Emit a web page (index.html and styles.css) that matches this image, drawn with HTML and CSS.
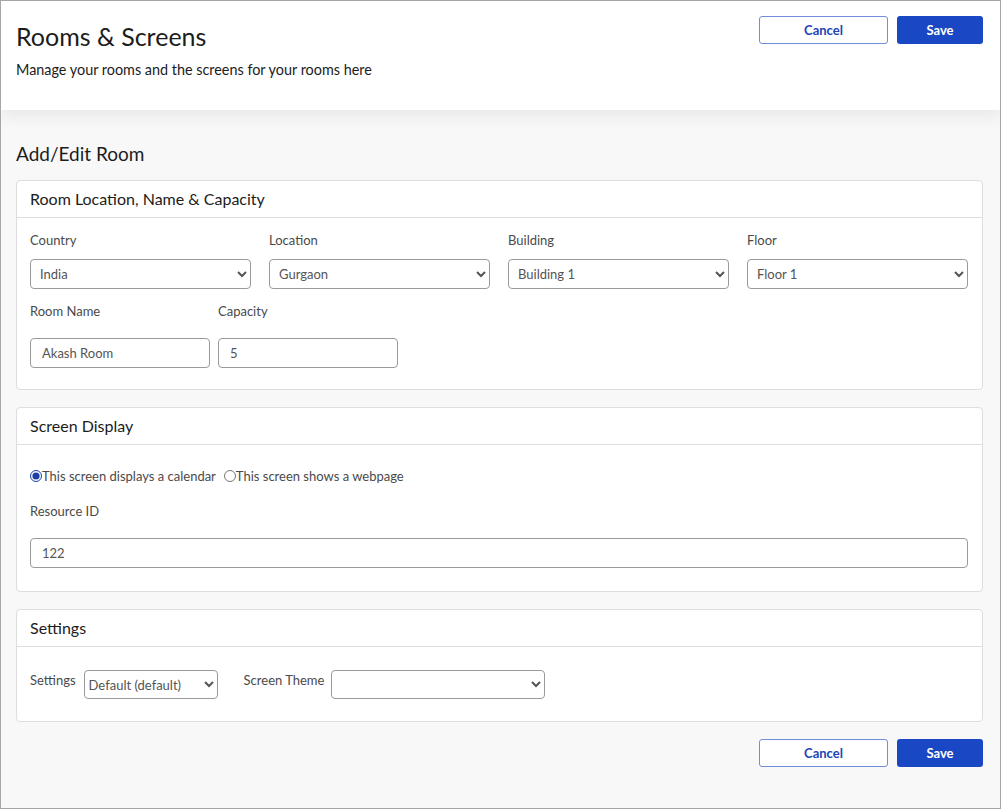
FILE: index.html
```html
<!DOCTYPE html>
<html lang="en">
<head>
    <meta charset="UTF-8">
    <meta name="viewport" content="width=device-width, initial-scale=1.0">
    <title>Rooms &amp; Screens</title>
    <link rel="stylesheet" href="styles.css">
</head>
<body>
    <div class="frame">
        <div class="page-header">
            <div class="header-text">
                <h1>Rooms &amp; Screens</h1>
                <p>Manage your rooms and the screens for your rooms here</p>
            </div>
            <div class="actions">
                <button class="btn btn-outline">Cancel</button>
                <button class="btn btn-primary">Save</button>
            </div>
        </div>

        <div class="content">
            <h2>Add/Edit Room</h2>

            <div class="card">
                <div class="card-title">Room Location, Name &amp; Capacity</div>
                <div class="card-body">
                    <div class="grid-4">
                        <div class="field">
                            <label>Country</label>
                            <select><option>India</option></select>
                        </div>
                        <div class="field">
                            <label>Location</label>
                            <select><option>Gurgaon</option></select>
                        </div>
                        <div class="field">
                            <label>Building</label>
                            <select><option>Building 1</option></select>
                        </div>
                        <div class="field">
                            <label>Floor</label>
                            <select><option>Floor 1</option></select>
                        </div>
                    </div>
                    <div class="row-2">
                        <div class="field field-small">
                            <label>Room Name</label>
                            <input type="text" value="Akash Room">
                        </div>
                        <div class="field field-small">
                            <label>Capacity</label>
                            <input type="text" value="5">
                        </div>
                    </div>
                </div>
            </div>

            <div class="card">
                <div class="card-title">Screen Display</div>
                <div class="card-body body-wide">
                    <div class="radios">
                        <label class="radio"><input type="radio" name="display" checked>This screen displays a calendar</label>
                        <label class="radio"><input type="radio" name="display">This screen shows a webpage</label>
                    </div>
                    <div class="field field-wide">
                        <label>Resource ID</label>
                        <input type="text" value="122">
                    </div>
                </div>
            </div>

            <div class="card">
                <div class="card-title">Settings</div>
                <div class="card-body body-wide body-settings">
                    <div class="inline-row">
                        <label>Settings</label>
                        <select class="sel-settings"><option>Default (default)</option></select>
                        <label class="theme-label">Screen Theme</label>
                        <select class="sel-theme"><option></option></select>
                    </div>
                </div>
            </div>

            <div class="footer-actions">
                <button class="btn btn-outline">Cancel</button>
                <button class="btn btn-primary">Save</button>
            </div>
        </div>
    </div>
</body>
</html>
```

FILE: styles.css
```css
* {
    box-sizing: border-box;
}

body {
    margin: 0;
    font-family: Lato, "Noto Sans", Arial, sans-serif;
    color: #1c1c1c;
}

.frame {
    height: 809px;
    border: 1px solid #a6a6a6;
    background: #f8f8f8;
    overflow: hidden;
}

.page-header {
    background: white;
    height: 109px;
    display: flex;
    justify-content: space-between;
    padding: 15px 17px 0 15px;
    box-shadow: 0 6px 16px rgba(0,0,0,0.07);
    position: relative;
}

.page-header h1 {
    font-size: 25px;
    font-weight: 400;
    margin: 5px 0 0;
    line-height: 30px;
}

.page-header p {
    font-size: 14.4px;
    margin: 10px 0 0;
    line-height: 18px;
}

.actions {
    display: flex;
    gap: 9px;
}

.btn {
    height: 28px;
    border-radius: 3px;
    font-family: inherit;
    font-size: 13px;
    font-weight: bold;
    cursor: pointer;
    padding: 0;
}

.btn-outline {
    width: 129px;
    background: white;
    color: #2244b8;
    border: 1px solid #6f8fdc;
}

.btn-primary {
    width: 86px;
    background: #1a47c4;
    color: white;
    border: none;
}

.content {
    padding: 0 17px 0 15px;
}

.content h2 {
    font-size: 19px;
    font-weight: 400;
    margin: 32px 0 14px;
    line-height: 24px;
}

.card {
    background: white;
    border: 1px solid #dedede;
    border-radius: 4px;
    margin-bottom: 17px;
}

.card-title {
    height: 37px;
    line-height: 36px;
    padding: 0 14px 0 13px;
    font-size: 16px;
    border-bottom: 1px solid #dedede;
}

.card-body {
    padding: 14px 14px 21px 13px;
}

.body-wide {
    padding-top: 23px;
    padding-bottom: 23px;
}

.body-settings {
    padding-bottom: 22px;
}

.field label,
.inline-row label {
    display: block;
    font-size: 13px;
    color: #4a4a4a;
    line-height: 16px;
}

.grid-4 {
    display: grid;
    grid-template-columns: repeat(4, 1fr);
    column-gap: 18px;
}

.grid-4 label {
    margin-bottom: 11px;
}

select,
input[type="text"] {
    width: 100%;
    height: 30px;
    border: 1px solid #9a9a9a;
    border-radius: 4px;
    background: white;
    font-family: inherit;
    font-size: 13px;
    color: #555;
    padding: 0 8px 0 5px;
}

input[type="text"] {
    padding: 0 11px;
}

.row-2 {
    display: flex;
    gap: 8px;
    margin-top: 14px;
}

.row-2 label {
    margin-bottom: 19px;
}

.field-small {
    width: 180px;
}

.radios {
    display: flex;
    gap: 8px;
    font-size: 13px;
    color: #4a4a4a;
}

.radio {
    display: flex;
    align-items: center;
    line-height: 16px;
}

.radio input {
    margin: 0;
    width: 12px;
    height: 12px;
    accent-color: #1a3fa8;
}

.field-wide {
    margin-top: 19px;
}

.field-wide label {
    margin-bottom: 19px;
}

.inline-row {
    display: flex;
    align-items: flex-start;
}

.inline-row label {
    margin-top: 2px;
}

.inline-row select {
    height: 29px;
}

.sel-settings {
    width: 134px;
    margin-left: 8px;
    padding-left: 0;
}

.theme-label {
    margin-left: 26px;
}

.sel-theme {
    width: 214px;
    margin-left: 7px;
}

.footer-actions {
    display: flex;
    justify-content: flex-end;
    gap: 9px;
}
```
